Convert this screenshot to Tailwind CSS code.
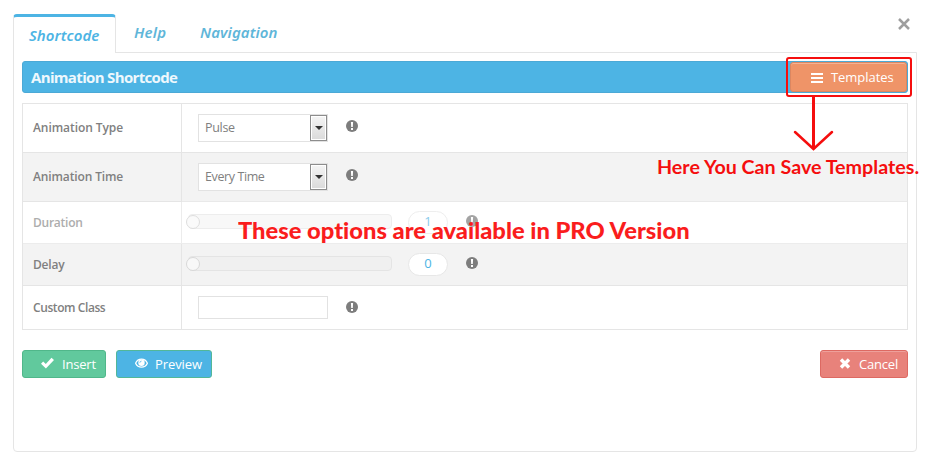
<!DOCTYPE html>
<html lang="en"><head><meta charset="utf-8"><title>Animation Shortcode</title>
<script src="https://cdn.jsdelivr.net/npm/@tailwindcss/browser@4"></script></head>
<body class="bg-white font-['Open_Sans',sans-serif] text-[13px] text-[#808080] whitespace-nowrap">
<svg class="hidden"><defs><symbol id="info" viewBox="0 0 12 12"><circle cx="6" cy="6" r="6" fill="#7d7d7d"/><path d="M4.9 2h2.2l-.3 5H5.2zM5 8h2v2H5z" fill="#fff"/></symbol></defs></svg>
<main class="relative h-[465px] w-[930px] overflow-hidden pl-[13px] pt-[14px]">
  <nav class="flex h-[38px] font-['Noto_Sans',sans-serif] text-[15px] leading-5 font-semibold italic text-[#5fb6d9]">
    <div class="relative z-10 h-[39px] w-[103px] rounded-t border-x border-t-[3px] border-x-[#e5e5e5] border-t-[#4db4e4] bg-white pl-[15px] pt-[8px] text-[#4db4e4]"><span class="tracking-[0.05px]">Shortcode</span></div>
    <div class="w-[66px] pl-[18px] pt-[8px] tracking-[0.2px]">Help</div>
    <div class="pl-[18px] pt-[8px] tracking-[0.1px]">Navigation</div>
  </nav>
  <section class="h-[400px] w-[904px] rounded-b border border-[#e5e5e5] px-2 pt-2">
    <header class="flex h-8 items-center justify-between rounded-[3px] border border-[#4ba9d6] bg-[#4db4e4] pl-2 text-white">
      <h1 class="text-[15px] font-bold tracking-[-0.66px] text-[#eef8fd]">Animation Shortcode</h1>
      <button class="flex h-[30px] w-[117px] items-center rounded-[3px] border border-[#dc8660] bg-[#ef9468] pl-5 pt-px shadow-[inset_0_1px_0_#f5b294]">
        <svg class="mr-2 h-3 w-[12px]" viewBox="0 0 12 12" stroke="#fff" stroke-width="2"><path d="M0 2h12M0 6h12M0 10h12"/></svg><span class="tracking-[-0.05px]">Templates</span></button>
    </header>
    <div class="mt-[10px] grid h-[227px] grid-cols-[159px_1fr] grid-rows-[49px_49px_42px_42px_43px] border border-[#e5e5e5] text-[12px]">
      <div class="flex items-center border-r border-b border-[#e5e5e5] pl-[10px] font-semibold tracking-[-0.07px]">Animation Type</div>
      <div class="flex items-center border-b border-[#e5e5e5] pl-4"><div class="flex h-7 w-[130px] items-center justify-between border border-[#e2e2e2] bg-white pl-[6px] text-[12.5px] tracking-[-0.3px]">Pulse<span class="flex h-[26px] w-[17px] items-center justify-center border border-[#8d8d8d] bg-linear-to-b from-[#f5f5f5] to-[#dadada] shadow-[inset_0_0_0_1px_#fff]"><svg width="8" height="4"><path d="M0 0h8L4 4z" fill="#333"/></svg></span></div><svg class="mb-1 ml-[18px]" width="12" height="12"><use href="#info"/></svg></div>
      <div class="flex items-center border-r border-b border-[#e5e5e5] bg-[#f3f3f3] pl-[10px] font-semibold tracking-[-0.13px]">Animation Time</div>
      <div class="flex items-center border-b border-[#e9e9e9] bg-[#f3f3f3] pl-4"><div class="flex h-7 w-[130px] items-center justify-between border border-[#e2e2e2] bg-white pl-[6px] text-[12.5px] tracking-[-0.4px]">Every Time<span class="flex h-[26px] w-[17px] items-center justify-center border border-[#8d8d8d] bg-linear-to-b from-[#f5f5f5] to-[#dadada] shadow-[inset_0_0_0_1px_#fff]"><svg width="8" height="4"><path d="M0 0h8L4 4z" fill="#333"/></svg></span></div><svg class="mb-1 ml-[18px]" width="12" height="12"><use href="#info"/></svg></div>
      <div class="flex items-center border-r border-b border-[#ececec] pl-[10px] font-semibold tracking-[-0.25px] text-[#adadad]">Duration</div>
      <div class="flex items-center border-b border-[#ececec] pl-1"><div class="mb-0.5 flex h-[15px] w-[206px] items-center"><span class="z-10 -mr-3 h-[14px] w-[14px] rounded-full border border-[#dedede] bg-[#fafafa]"></span><span class="h-[15px] flex-1 rounded border border-[#ededed] bg-[#f8f8f8]"></span></div><span class="ml-4 flex h-[23px] w-10 items-center justify-center rounded-full border border-[#eee] bg-white pb-px text-[13px] text-[#8accec]">1</span><svg class="mb-[3px] ml-[18px] opacity-70" width="12" height="12"><use href="#info"/></svg></div>
      <div class="flex items-center border-r border-b border-[#e5e5e5] bg-[#f3f3f3] pl-[10px] font-semibold tracking-[-0.2px]">Delay</div>
      <div class="flex items-center border-b border-[#e5e5e5] bg-[#f3f3f3] pl-1"><div class="mb-0.5 flex h-[15px] w-[206px] items-center"><span class="z-10 -mr-3 h-[14px] w-[14px] rounded-full border border-[#d8d8d8] bg-[#f8f8f8]"></span><span class="h-[15px] flex-1 rounded border border-[#e4e4e4] bg-[#f0f0f0]"></span></div><span class="ml-4 flex h-[23px] w-10 items-center justify-center rounded-full border border-[#e7e7e7] bg-white pb-px text-[13px] text-[#4db4e4]">0</span><svg class="mb-[3px] ml-[18px]" width="12" height="12"><use href="#info"/></svg></div>
      <div class="flex items-center border-r border-[#e5e5e5] pl-[10px] font-semibold tracking-[-0.42px]">Custom Class</div>
      <div class="flex items-center pl-4"><span class="h-[23px] w-[130px] border border-[#e2e2e2] bg-white"></span><svg class="mb-0.5 ml-[18px]" width="12" height="12"><use href="#info"/></svg></div>
    </div>
    <footer class="mt-5 flex h-7 text-[13px] text-white">
      <button class="flex w-[84px] items-center rounded-[3px] border border-[#50b78a] bg-[#61c99d] pl-[18px] tracking-[-0.2px]"><svg class="mr-2 mb-0.5" width="13" height="12"><path d="M0 6.7 2.200 4.400l2.600 2.500L10.500.7 13 3 4.900 11.500z" fill="#fff"/></svg><span class="pt-0.5">Insert</span></button>
      <button class="ml-[10px] flex w-24 items-center rounded-[3px] border border-[#52b798] bg-[#4db4e4] pl-[18px] tracking-[-0.1px]"><svg class="mr-[7px] mb-0.5" width="13" height="11" fill="none" stroke="#fff"><path d="M.6 5.200C3-.2 10-.2 12.400 5.200 10 10.500 3 10.500.6 5.200z" stroke-width="1.300"/><circle cx="6.500" cy="4.700" r="3.200" fill="#fff" stroke="none"/><path d="M4.900 4.700q0-1.600 1.600-1.600" stroke="#4db4e4" stroke-width=".8"/></svg><span class="pt-0.5">Preview</span></button>
      <button class="ml-auto flex w-[88px] items-center rounded-[3px] border border-[#dd6962] bg-[#e8827b] pl-[18px] tracking-[-0.2px] shadow-[inset_0_1px_0_#eea09b]"><svg class="mr-2 mb-0.5" width="12" height="11"><path d="m2 1.500 8 8m0-8-8 8" stroke="#fff" stroke-width="3.400"/></svg><span class="pt-0.5">Cancel</span></button>
    </footer>
  </section>
  <svg class="absolute left-[898px] top-[18px]" width="12" height="12"><path d="m1 1 10 10M11 1 1 11" stroke="#9e9e9e" stroke-width="2.500"/></svg>
  <div class="absolute left-[786px] top-[57px] h-10 w-[126px] rounded-[3px] border-2 border-[#f50e0e]"></div>
  <svg class="absolute left-[793px] top-[96px]" width="41" height="56" fill="none" stroke="#f50e0e"><path d="M20.500 0v53" stroke-width="3"/><path d="m2 36 18.500 17L39 36" stroke-width="2.500" stroke-linecap="round"/></svg>
  <div class="absolute left-[657px] top-[155px] origin-left scale-x-[1.093] font-['Lato',sans-serif] text-[18px] leading-6 font-bold text-[#f50e0e] [font-variant-ligatures:none]">Here You Can Save Templates.</div>
  <div class="absolute left-[238px] top-[217px] origin-left scale-x-[1.078] font-['Lato',sans-serif] text-[22px] leading-7 font-black text-[#fa1d1d] [font-variant-ligatures:none]">These options are available in PRO Version</div>
</main></body></html>
